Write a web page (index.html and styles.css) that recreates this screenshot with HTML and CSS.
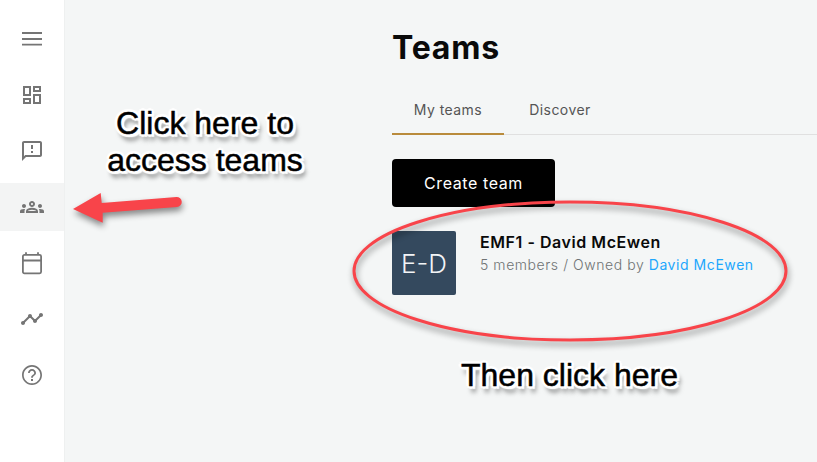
FILE: index.html
```html
<!DOCTYPE html>
<html lang="en">
<head>
<meta charset="utf-8">
<title>Teams</title>
<link rel="stylesheet" href="styles.css">
</head>
<body>
<div class="app">
  <nav class="sidebar">
    <div class="nav-item"><svg class="icon" viewBox="0 0 24 24"><path d="M2 5.100h20v1.800H2zM2 11.100h20v1.800H2zM2 16.700h20v1.800H2z"/></svg></div>
    <div class="nav-item"><svg class="icon" viewBox="0 0 24 24"><path d="M19 5v2h-4V5h4M9 5v6H5V5h4m10 8v6h-4v-6h4M9 17v2H5v-2h4M21 3h-8v6h8V3zM11 3H3v10h8V3zm10 8h-8v10h8V11zm-10 4H3v6h8v-6z"/></svg></div>
    <div class="nav-item"><svg class="icon" viewBox="0 0 24 24"><path d="M20 2H4c-1.100 0-2 .9-2 2v18l4-4h14c1.100 0 2-.9 2-2V4c0-1.100-.9-2-2-2zm0 14H5.170L4 17.170V4h16v12zm-9-4h2v2h-2zm0-6h2v4h-2z"/></svg></div>
    <div class="nav-item active"><svg class="icon" viewBox="0 0 24 24"><path d="M4 13c1.100 0 2-.9 2-2s-.9-2-2-2-2 .9-2 2 .9 2 2 2zm1.130 1.100c-.37-.06-.74-.1-1.130-.1-.99 0-1.930.21-2.780.58C.48 14.900 0 15.620 0 16.430V18h4.500v-1.610c0-.83.23-1.610.63-2.290zM20 13c1.100 0 2-.9 2-2s-.9-2-2-2-2 .9-2 2 .9 2 2 2zm4 3.430c0-.81-.48-1.530-1.220-1.850-.85-.37-1.790-.58-2.780-.58-.39 0-.76.04-1.130.1.4.68.63 1.460.63 2.290V18H24v-1.570zm-7.760-2.780c-1.170-.52-2.610-.9-4.240-.9-1.630 0-3.070.39-4.240.9C6.680 14.130 6 15.210 6 16.390V18h12v-1.610c0-1.180-.68-2.260-1.760-2.740zM8.070 16c.09-.23.13-.39.91-.69.97-.38 1.990-.56 3.020-.56s2.050.18 3.020.56c.77.3.81.46.91.69H8.070zM12 8c.55 0 1 .45 1 1s-.45 1-1 1-1-.45-1-1 .45-1 1-1m0-2c-1.660 0-3 1.340-3 3s1.340 3 3 3 3-1.340 3-3-1.340-3-3-3z"/></svg></div>
    <div class="nav-item"><svg class="icon icon-line" viewBox="0 0 24 24"><rect x="2.900" y="3.900" width="18.200" height="18.400" rx="1.500"/><path d="M3 9.500h18M6 1.200v2.700M18 1.200v2.700"/></svg></div>
    <div class="nav-item"><svg class="icon" viewBox="0 0 24 24"><path d="M23 8c0 1.100-.9 2-2 2-.18 0-.35-.02-.51-.07l-3.560 3.550c.05.16.07.34.07.52 0 1.100-.9 2-2 2s-2-.9-2-2c0-.18.02-.36.07-.52l-2.550-2.550c-.16.05-.34.07-.52.07s-.36-.02-.52-.07l-4.550 4.560c.05.16.07.33.07.51 0 1.100-.9 2-2 2s-2-.9-2-2 .9-2 2-2c.18 0 .35.02.51.07l4.560-4.550C8.020 9.360 8 9.180 8 9c0-1.100.9-2 2-2s2 .9 2 2c0 .18-.02.36-.07.52l2.550 2.550c.16-.05.34-.07.52-.07s.36.02.52.07l3.550-3.560C19.020 8.350 19 8.180 19 8c0-1.100.9-2 2-2s2 .9 2 2z"/></svg></div>
    <div class="nav-item"><svg class="icon" viewBox="0 0 24 24"><path d="M11 18h2v-2h-2v2zm1-16C6.480 2 2 6.480 2 12s4.480 10 10 10 10-4.480 10-10S17.520 2 12 2zm0 18.300c-4.580 0-8.300-3.720-8.300-8.300S7.420 3.700 12 3.700s8.300 3.720 8.300 8.300-3.720 8.300-8.300 8.300zM12 6c-2.210 0-4 1.790-4 4h1.800c0-1.220.98-2.200 2.200-2.200s2.200.98 2.200 2.200c0 2-3.100 1.750-3.100 4.800h1.800c0-2.250 3.100-2.500 3.100-4.800 0-2.210-1.790-4-4-4z"/></svg></div>
  </nav>
  <main class="content">
    <h1 class="title">Teams</h1>
    <div class="tabs">
      <div class="tab tab-active">My teams</div>
      <div class="tab">Discover</div>
    </div>
    <button class="create">Create team</button>
    <div class="team">
      <div class="avatar">E-D</div>
      <div class="team-info">
        <div class="team-name">EMF1 - David McEwen</div>
        <div class="team-meta">5 members / Owned by <a class="owner">David McEwen</a></div>
      </div>
    </div>
  </main>
</div>
<svg class="markup" viewBox="0 0 817 462" width="817" height="462">
  <ellipse class="ring" cx="570" cy="271" rx="216" ry="69"/>
  <path class="arrow" d="M73 209 100.700 193 101.700 203 176.500 197A5 5 0 0 1 177 207L102.700 212.700 102.700 222.700Z"/>
</svg>
<div class="note note-teams">Click here to<br>access teams</div>
<div class="note note-click">Then click here</div>
</body>
</html>
```

FILE: styles.css
```css
* { box-sizing: border-box; }
html, body { margin: 0; height: 100%; overflow: hidden; }
body { position: relative; background: #f4f6f6; font-family: "Inter", "Liberation Sans", sans-serif; }
.app { display: flex; height: 462px; }
.sidebar {
  width: 65px; flex: none; background: #fff; border-right: 1px solid #eef0f0;
  display: flex; flex-direction: column; gap: 8px; padding-top: 15px;
}
.nav-item { height: 48px; display: flex; align-items: center; justify-content: center; }
.nav-item.active { background: #f3f4f4; }
.icon { width: 24px; height: 24px; fill: #757575; }
.icon-line { fill: none; stroke: #757575; stroke-width: 1.800; }
.content { flex: 1; padding: 29px 0 0 327px; }
.title { margin: 0; font-size: 32px; line-height: 38px; font-weight: 700; color: #0a0a0a; letter-spacing: .8px; }
.tabs { display: flex; margin-top: 18px; border-bottom: 1px solid #e0e0e0; height: 50px; }
.tab { width: 112px; padding-top: 15px; text-align: center; font-size: 14px; line-height: 20px; letter-spacing: .45px; color: #555; height: 50px; }
.tab-active { border-bottom: 2px solid #b98b3c; }
.create {
  display: block; margin-top: 24px; width: 163px; height: 48px; border: 0; border-radius: 4px;
  background: #000; color: #fff; font: 400 16px "Inter", "Liberation Sans", sans-serif; letter-spacing: .6px;
}
.team { display: flex; gap: 24px; margin-top: 24px; }
.avatar {
  width: 64px; height: 64px; border-radius: 2px; background: #34495e; color: #f2f4f6;
  display: flex; align-items: center; justify-content: center; font-size: 26px; font-weight: 300;
}
.team-info { padding-top: 1px; }
.team-name { font-size: 16px; line-height: 20px; font-weight: 600; color: #0a0a0a; letter-spacing: .55px; }
.team-meta { margin-top: 3px; font-size: 14px; line-height: 20px; font-weight: 300; color: #6f7374; letter-spacing: .56px; }
.owner { color: #1ea7fd; font-weight: 400; }
.markup { position: absolute; left: 0; top: 0; pointer-events: none; filter: drop-shadow(1px 4px 3px rgba(0,0,0,.45)); }
.ring { fill: none; stroke: #f8444a; stroke-width: 3; }
.arrow { fill: #f8444a; }
.note {
  position: absolute; font-family: "Liberation Sans", Arial, sans-serif; font-size: 32px; line-height: 37px;
  color: #000; text-align: center; white-space: nowrap; -webkit-text-stroke: .5px #000;
  text-shadow: 3px 0 1px #fff, -3px 0 1px #fff, 0 3px 1px #fff, 0 -3px 1px #fff, 2px 2px 1px #fff, -2px 2px 1px #fff, 2px -2px 1px #fff, -2px -2px 1px #fff, 3px 3px 1px #fff, 3px 6px 5px rgba(0,0,0,.65);
}
.note-teams { left: 105px; top: 105px; width: 200px; }
.note-click { left: 461px; top: 357px; }
```
